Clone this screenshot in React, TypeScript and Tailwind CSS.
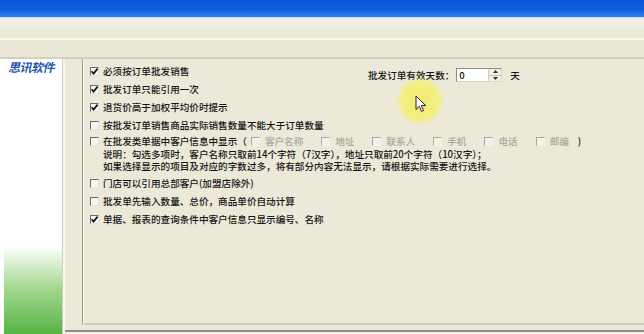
import React from "react";

const FONT = '"Noto Sans CJK SC", "Noto Sans", sans-serif';

function Box({ checked = false, disabled = false }: { checked?: boolean; disabled?: boolean }) {
  return (
    <span
      className={
        "relative inline-block w-[9px] h-[9px] shrink-0 border-t border-l border-b border-r " +
        (disabled
          ? "border-t-[#a8a8a0] border-l-[#a8a8a0] border-b-[#f4f2ea] border-r-[#f4f2ea] bg-[#f2f0e8]"
          : "border-t-[#6e6e6e] border-l-[#6e6e6e] border-b-[#e4e2da] border-r-[#e4e2da] bg-[#f7f6f2]")
      }
    >
      {checked && (
        <svg width="9" height="9" viewBox="0 0 9 9" className="absolute left-[-1px] top-[-1px]">
          <path d="M1.6 4.2 L3.6 6.6 L7.6 1.6" fill="none" stroke="#111" strokeWidth="1.7" />
        </svg>
      )}
    </span>
  );
}

function Row({ checked, children, className = "" }: { checked?: boolean; children: React.ReactNode; className?: string }) {
  return (
    <div className={"flex items-center gap-[4px] h-[18px] " + className}>
      <Box checked={checked} />
      <span className="whitespace-nowrap">{children}</span>
    </div>
  );
}

function Sub({ label, last = false }: { label: string; last?: boolean }) {
  return (
    <span className={"flex items-center gap-[5px] " + (last ? "" : "mr-[14px]")}>
      <Box disabled />
      <span className="text-[#a9a8a0] whitespace-nowrap">{label}</span>
    </span>
  );
}

export default function App() {
  return (
    <div
      className="relative w-[644px] h-[334px] overflow-hidden bg-[#ece9d8] text-[9.6px] text-[#141414] font-medium"
      style={{ fontFamily: FONT }}
    >
      {/* title bar */}
      <div className="h-[17px] bg-gradient-to-b from-[#0a57d6] via-[#0b5cdc] to-[#2f7fee]" />
      <div className="h-[1px] bg-[#c9d8f0]" />
      <div className="h-[20px] bg-gradient-to-b from-[#f1efe4] to-[#ebe8d8]" />
      <div className="h-[2px] bg-[#f8f7f1]" />
      <div className="h-[17px] bg-[#ebe8d8]" />
      <div className="h-[2px] bg-[#d4d0bd]" />

      <div className="flex h-[275px]">
        {/* sidebar */}
        <div className="w-[62px] bg-white flex flex-col">
          <div className="pl-[8px] pt-[1px] text-[12px] font-bold italic text-[#2456b0] leading-[14px] tracking-[-0.5px]">
            思讯软件
          </div>
          <div className="flex-1" />
          <div className="ml-[4px] h-[88px] bg-gradient-to-b from-white via-[#9fd68c] to-[#56b343]" />
        </div>
        <div className="w-[1px] bg-[#d2d0c6]" />
        <div className="w-[2px] bg-[#f6f5ef]" />

        {/* right area */}
        <div className="flex-1 flex flex-col">
          <div className="flex h-[266px]">
            <div className="w-[17px]" />
            <div className="w-[1px] bg-[#9d9b8e]" />
            <div className="w-[1px] bg-[#fbfaf5]" />
            <div className="flex-1 flex flex-col border-b-[2px] border-[#cfcbb8] pl-[6px] pt-[3px]">
              <div className="flex">
                <div className="w-[278px] flex flex-col">
                  <Row checked>必须按订单批发销售</Row>
                  <Row checked>批发订单只能引用一次</Row>
                  <Row checked>退货价高于加权平均价时提示</Row>
                </div>
                <div className="flex items-center h-[14px] mt-[6px]">
                  <span className="whitespace-nowrap">批发订单有效天数：</span>
                  <div className="ml-[2px] flex w-[46px] h-[14px] border border-[#8c8c84] border-b-[#d8d6cc] border-r-[#d8d6cc] bg-white">
                    <span className="flex-1 pl-[2px] leading-[12px] text-[9.6px]">0</span>
                    <div className="w-[13px] flex flex-col border-l border-[#d0cec4] bg-[#f1efe6]">
                      <div className="flex-1 flex items-center justify-center border-b border-[#c8c6bc]">
                        <svg width="5" height="3" viewBox="0 0 5 3"><path d="M0 3 L2.5 0 L5 3 Z" fill="#333" /></svg>
                      </div>
                      <div className="flex-1 flex items-center justify-center">
                        <svg width="5" height="3" viewBox="0 0 5 3"><path d="M0 0 L2.5 3 L5 0 Z" fill="#333" /></svg>
                      </div>
                    </div>
                  </div>
                  <span className="ml-[8px]">天</span>
                </div>
              </div>
              <Row>按批发订单销售商品实际销售数量不能大于订单数量</Row>
              <div className="flex items-center gap-[4px] h-[14px]">
                <Box />
                <span className="whitespace-nowrap">在批发类单据中客户信息中显示（</span>
                <Sub label="客户名称" />
                <Sub label="地址" />
                <Sub label="联系人" />
                <Sub label="手机" />
                <Sub label="电话" />
                <Sub label="邮编" last />
                <span className="ml-[5px]">)</span>
              </div>
              <div className="pl-[13px] leading-[12px] whitespace-nowrap">
                <div>说明：勾选多项时，客户名称只取前14个字符（7汉字），地址只取前20个字符（10汉字）；</div>
                <div>如果选择显示的项目及对应的字数过多，将有部分内容无法显示，请根据实际需要进行选择。</div>
              </div>
              <Row className="mt-[2px]">门店可以引用总部客户(加盟店除外)</Row>
              <Row className="h-[17px]">批发单先输入数量、总价，商品单价自动计算</Row>
              <Row checked className="h-[17px]">单据、报表的查询条件中客户信息只显示编号、名称</Row>
            </div>
          </div>
          <div className="h-[5px]" />
          <div className="h-[2px] bg-[#8e8c80]" />
          <div className="flex-1 bg-[#f1efe6]" />
        </div>
      </div>

      {/* cursor highlight overlay */}
      <div className="absolute left-[396px] top-[77px] w-[48px] h-[48px] rounded-full bg-[radial-gradient(circle,#f2ec6e_0%,#f3ee84_55%,rgba(236,233,216,0)_72%)]" />
      <svg className="absolute left-[415px] top-[95px]" width="12" height="18" viewBox="0 0 12 18">
        <path d="M1 1 L1 14.5 L4.3 11.3 L6.6 16.4 L8.6 15.5 L6.4 10.6 L10.8 10.6 Z" fill="#fff" stroke="#222" strokeWidth="1" />
      </svg>
    </div>
  );
}
